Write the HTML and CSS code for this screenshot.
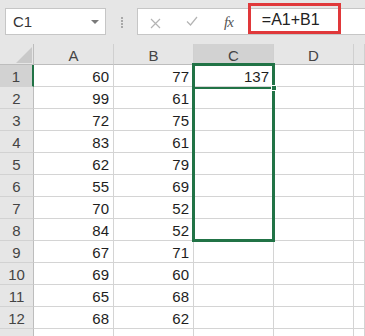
FILE: index.html
```html
<!DOCTYPE html>
<html>
<head>
<meta charset="utf-8">
<link rel="stylesheet" href="styles.css">
</head>
<body>
<div class="toolbar">
  <div class="namebox">
    <span class="name">C1</span>
    <svg class="dd" width="8" height="5" viewBox="0 0 8 5"><path d="M0 0H8L4 4Z" fill="#7a7a7a"/></svg>
  </div>
  <div class="grip"><i></i><i></i><i></i><i></i></div>
  <div class="fbar">
    <svg class="ico-x" width="11" height="11" viewBox="0 0 11 11"><path d="M1 1L10 10M10 1L1 10" stroke="#b4b4b4" stroke-width="1.2" fill="none"/></svg>
    <svg class="ico-ok" width="12" height="10" viewBox="0 0 12 10"><path d="M1 5.5L4.5 9L11 1" stroke="#b4b4b4" stroke-width="1.2" fill="none"/></svg>
    <span class="fx">fx</span>
    <div class="formula">=A1+B1</div>
  </div>
</div>
<div class="sheet">
  <div class="row head">
    <div class="rh corner"><svg width="16" height="16" viewBox="0 0 16 16"><path d="M16 0V16H0Z" fill="#c9c9c9"/></svg></div>
    <div class="ch">A</div><div class="ch">B</div><div class="ch on">C</div><div class="ch">D</div><div class="ch rest"></div>
  </div>
  <div class="row"><div class="rh on">1</div><div class="c">60</div><div class="c">77</div><div class="c">137</div><div class="c"></div><div class="c rest"></div></div>
  <div class="row"><div class="rh">2</div><div class="c">99</div><div class="c">61</div><div class="c"></div><div class="c"></div><div class="c rest"></div></div>
  <div class="row"><div class="rh">3</div><div class="c">72</div><div class="c">75</div><div class="c"></div><div class="c"></div><div class="c rest"></div></div>
  <div class="row"><div class="rh">4</div><div class="c">83</div><div class="c">61</div><div class="c"></div><div class="c"></div><div class="c rest"></div></div>
  <div class="row"><div class="rh">5</div><div class="c">62</div><div class="c">79</div><div class="c"></div><div class="c"></div><div class="c rest"></div></div>
  <div class="row"><div class="rh">6</div><div class="c">55</div><div class="c">69</div><div class="c"></div><div class="c"></div><div class="c rest"></div></div>
  <div class="row"><div class="rh">7</div><div class="c">70</div><div class="c">52</div><div class="c"></div><div class="c"></div><div class="c rest"></div></div>
  <div class="row"><div class="rh">8</div><div class="c">84</div><div class="c">52</div><div class="c"></div><div class="c"></div><div class="c rest"></div></div>
  <div class="row"><div class="rh">9</div><div class="c">67</div><div class="c">71</div><div class="c"></div><div class="c"></div><div class="c rest"></div></div>
  <div class="row"><div class="rh">10</div><div class="c">69</div><div class="c">60</div><div class="c"></div><div class="c"></div><div class="c rest"></div></div>
  <div class="row"><div class="rh">11</div><div class="c">65</div><div class="c">68</div><div class="c"></div><div class="c"></div><div class="c rest"></div></div>
  <div class="row"><div class="rh">12</div><div class="c">68</div><div class="c">62</div><div class="c"></div><div class="c"></div><div class="c rest"></div></div>
  <div class="row"><div class="rh">13</div><div class="c"></div><div class="c"></div><div class="c"></div><div class="c"></div><div class="c rest"></div></div>
  <div class="sel"></div>
  <div class="active"><span class="handle"></span></div>
</div>
</body>
</html>
```

FILE: styles.css
```css
* { box-sizing: border-box; }
html, body { margin: 0; padding: 0; }
body {
  width: 365px;
  height: 336px;
  overflow: hidden;
  background: #fff;
  font-family: "Liberation Sans", Arial, sans-serif;
  color: #222;
}
.toolbar {
  height: 44px;
  background: #e6e6e6;
  display: flex;
  align-items: flex-start;
  padding: 8px 0 0 5px;
}
.namebox {
  width: 101px;
  height: 27px;
  background: #fff;
  border: 1px solid #c6c6c6;
  display: flex;
  align-items: center;
  justify-content: space-between;
  padding: 0 6px 0 7px;
}
.name { font-size: 15px; color: #333; }
.dd { margin-top: 1px; }
.grip {
  margin: 9px 0 0 15px;
  width: 2px;
  display: flex;
  flex-direction: column;
  gap: 1px;
}
.grip i { display: block; width: 2px; height: 2px; background: #a8a8a8; }
.fbar {
  margin-left: 14px;
  flex: 1;
  height: 27px;
  background: #fff;
  border: 1px solid #c6c6c6;
  border-right: none;
  display: flex;
  align-items: flex-start;
  padding-left: 12px;
}
.ico-x { margin-top: 9px; }
.ico-ok { margin: 7px 0 0 25px; }
.fx {
  margin: 6px 0 0 26px;
  font-family: "Liberation Serif", "Times New Roman", serif;
  font-style: italic;
  font-size: 15px;
  color: #555;
  letter-spacing: -1px;
  line-height: 14px;
}
.formula {
  margin: -6px 0 0 15px;
  width: 93px;
  height: 31px;
  border: 3px solid #e0383a;
  font-size: 16px;
  color: #222;
  padding: 5px 0 0 11px;
  line-height: 18px;
}
.sheet { position: relative; }
.row { display: flex; height: 22px; }
.row.head { height: 21px; }
.rh {
  width: 34px;
  flex: none;
  background: #e6e6e6;
  border-right: 1px solid #bdbdbd;
  border-bottom: 1px solid #d2d2d2;
  color: #444;
  font-size: 15px;
  text-align: center;
  line-height: 21px;
  padding-top: 1px;
}
.rh.on { background: #d2d2d2; border-right: 2px solid #217346; }
.corner {
  display: flex;
  align-items: flex-end;
  justify-content: flex-end;
  padding: 0 1px 1px 0;
  border-bottom: 1px solid #bdbdbd;
}
.ch {
  width: 80px;
  flex: none;
  background: #e6e6e6;
  border-right: 1px solid #d0d0d0;
  border-bottom: 1px solid #bdbdbd;
  color: #444;
  font-size: 15px;
  text-align: center;
  line-height: 20px;
  padding-top: 2px;
}
.ch.on { background: #d2d2d2; }
.ch.rest, .c.rest { flex: 1; width: auto; }
.c {
  width: 80px;
  flex: none;
  border-right: 1px solid #d4d4d4;
  border-bottom: 1px solid #d4d4d4;
  font-size: 15px;
  text-align: right;
  padding: 2px 4px 0 0;
  line-height: 20px;
  color: #1e1e1e;
}
.sel {
  position: absolute;
  left: 192px;
  top: 19px;
  width: 83px;
  height: 179px;
  border: 3px solid #217346;
}
.active {
  position: absolute;
  left: 192px;
  top: 19px;
  width: 83px;
  height: 26px;
  border-bottom: 2px solid #217346;
}
.handle {
  position: absolute;
  right: -2px;
  bottom: -4px;
  width: 6px;
  height: 6px;
  background: #217346;
  border: 1px solid #fff;
}
```
